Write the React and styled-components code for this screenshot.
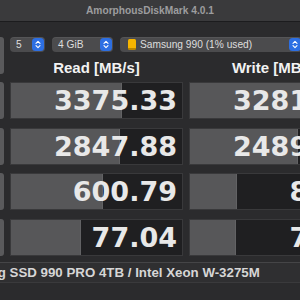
import React from "react";
import styled, { createGlobalStyle } from "styled-components";

const GlobalStyle = createGlobalStyle`
  html, body {
    margin: 0;
    padding: 0;
    background: #262628;
  }
  body {
    width: 300px;
    height: 300px;
    overflow: hidden;
    font-family: "Liberation Sans", Arial, sans-serif;
  }
`;

const Window = styled.div`
  width: 300px;
  height: 300px;
  overflow: hidden;
  background: #2b2b2d;
  display: flex;
  flex-direction: column;
`;

const TitleBar = styled.div`
  flex: none;
  height: 21px;
  background: #3a3a3c;
  border-bottom: 1px solid #1c1c1e;
  display: flex;
  align-items: center;
  justify-content: center;
  color: #9d9d9f;
  font-size: 10.2px;
  font-weight: bold;
`;

const Body = styled.div`
  margin-left: -59px;
  width: 440px;
  padding-top: 15px;
  display: flex;
  flex-direction: column;
`;

const Board = styled.div`
  display: grid;
  grid-template-columns: 63px 173px 173px;
  grid-template-rows: 15px 13px repeat(4, 37px);
  column-gap: 6px;
  row-gap: 8.5px;
`;

const SideButton = styled.div`
  grid-column: 1;
  grid-row: ${(p) => p.$row};
  background: #5a5a5c;
  border-radius: 3px;
  display: flex;
  align-items: center;
  justify-content: center;
  text-align: center;
  color: #e0e0e0;
  font-size: 10px;
  font-weight: bold;
  line-height: 12px;
  white-space: pre;
`;

const Toolbar = styled.div`
  grid-column: 2 / 4;
  grid-row: 1;
  display: flex;
  gap: 7px;
`;

const Select = styled.div`
  width: ${(p) => p.$w}px;
  height: 15px;
  flex: none;
  box-sizing: border-box;
  background: #4b4b4d;
  border-radius: 4px;
  box-shadow: inset 0 1px 0 rgba(255, 255, 255, 0.06);
  display: flex;
  align-items: center;
  padding-left: ${(p) => p.$pad || 6}px;
  gap: 4px;
  color: #dedede;
  font-size: 10.2px;
`;

const SelectLabel = styled.span`
  flex: 1;
  white-space: nowrap;
`;

const Stepper = styled.div`
  width: 12px;
  height: 13px;
  margin-right: 1px;
  flex: none;
  background: #2d6fe3;
  border-radius: 3.5px;
  display: flex;
  align-items: center;
  justify-content: center;
`;

const Drive = styled.div`
  width: 8px;
  height: 11px;
  flex: none;
  border-radius: 1.5px;
  background: linear-gradient(#f7b500 0 78%, #b98400 78% 100%);
`;

const Header = styled.div`
  grid-column: ${(p) => p.$col};
  grid-row: 2;
  display: flex;
  align-items: center;
  justify-content: center;
  color: #f2f2f2;
  font-size: 15px;
  font-weight: bold;
  white-space: nowrap;
`;

const Cell = styled.div`
  grid-column: ${(p) => p.$col};
  grid-row: ${(p) => p.$row};
  box-sizing: border-box;
  background: #1f1f21;
  border: 1px solid #39393b;
  display: grid;
  overflow: hidden;
`;

const Bar = styled.div`
  grid-area: 1 / 1;
  justify-self: start;
  margin: -1px 0 -1px -1px;
  background: #575759;
  border: 1px solid #626264;
  box-sizing: border-box;
`;

const Value = styled.div`
  grid-area: 1 / 1;
  justify-self: end;
  align-self: center;
  padding-right: 5px;
  color: #e8e8e8;
  font-family: "DejaVu Sans", "Liberation Sans", sans-serif;
  font-size: 27px;
  font-weight: bold;
  line-height: 35px;
  white-space: nowrap;
`;

const Footer = styled.div`
  margin-top: 6.5px;
  height: 21px;
  box-sizing: border-box;
  background: #2f2f31;
  border-top: 1px solid #454547;
  border-bottom: 1px solid #3a3a3c;
  display: flex;
  align-items: center;
  padding-left: 5px;
  color: #d6d6d6;
  font-size: 13.3px;
  font-weight: bold;
  white-space: nowrap;
`;

const Chevrons = () => (
  <svg width="6" height="9" viewBox="0 0 6 9">
    <path
      d="M1 3.3 L3 1.3 L5 3.3 M1 5.7 L3 7.7 L5 5.7"
      fill="none"
      stroke="#fff"
      strokeWidth="1.1"
      strokeLinecap="round"
      strokeLinejoin="round"
    />
  </svg>
);

const tests = [
  { label: "SEQ1M\nQD8", read: 3375.33, write: 3281.56 },
  { label: "SEQ1M\nQD1", read: 2847.88, write: 2489.31 },
  { label: "RND4K\nQD64", read: 600.79, write: 8.93 },
  { label: "RND4K\nQD1", read: 77.04, write: 7.98 },
];

// bars are on a log scale from 0.1 to 1,000,000 MB/s
const barWidth = (v) => (173 * (Math.log10(v) + 1)) / 7;

export default function App() {
  return (
    <>
      <GlobalStyle />
      <Window>
        <TitleBar>AmorphousDiskMark 4.0.1</TitleBar>
        <Body>
          <Board>
            <SideButton $row="1 / 3">All</SideButton>
            <Toolbar>
              <Select $w={35}>
                <SelectLabel>5</SelectLabel>
                <Stepper><Chevrons /></Stepper>
              </Select>
              <Select $w={61}>
                <SelectLabel>4 GiB</SelectLabel>
                <Stepper><Chevrons /></Stepper>
              </Select>
              <Select $w={182} $pad={8}>
                <Drive />
                <SelectLabel>Samsung 990 (1% used)</SelectLabel>
                <Stepper><Chevrons /></Stepper>
              </Select>
            </Toolbar>
            <Header $col={2}>Read [MB/s]</Header>
            <Header $col={3}>Write [MB/s]</Header>
            {tests.map((t, i) => (
              <React.Fragment key={t.label}>
                <SideButton $row={i + 3}>{t.label}</SideButton>
                <Cell $col={2} $row={i + 3}>
                  <Bar style={{ width: barWidth(t.read) }} />
                  <Value>{t.read.toFixed(2)}</Value>
                </Cell>
                <Cell $col={3} $row={i + 3}>
                  <Bar style={{ width: barWidth(t.write) }} />
                  <Value>{t.write.toFixed(2)}</Value>
                </Cell>
              </React.Fragment>
            ))}
          </Board>
          <Footer>Samsung SSD 990 PRO 4TB / Intel Xeon W-3275M</Footer>
        </Body>
      </Window>
    </>
  );
}
